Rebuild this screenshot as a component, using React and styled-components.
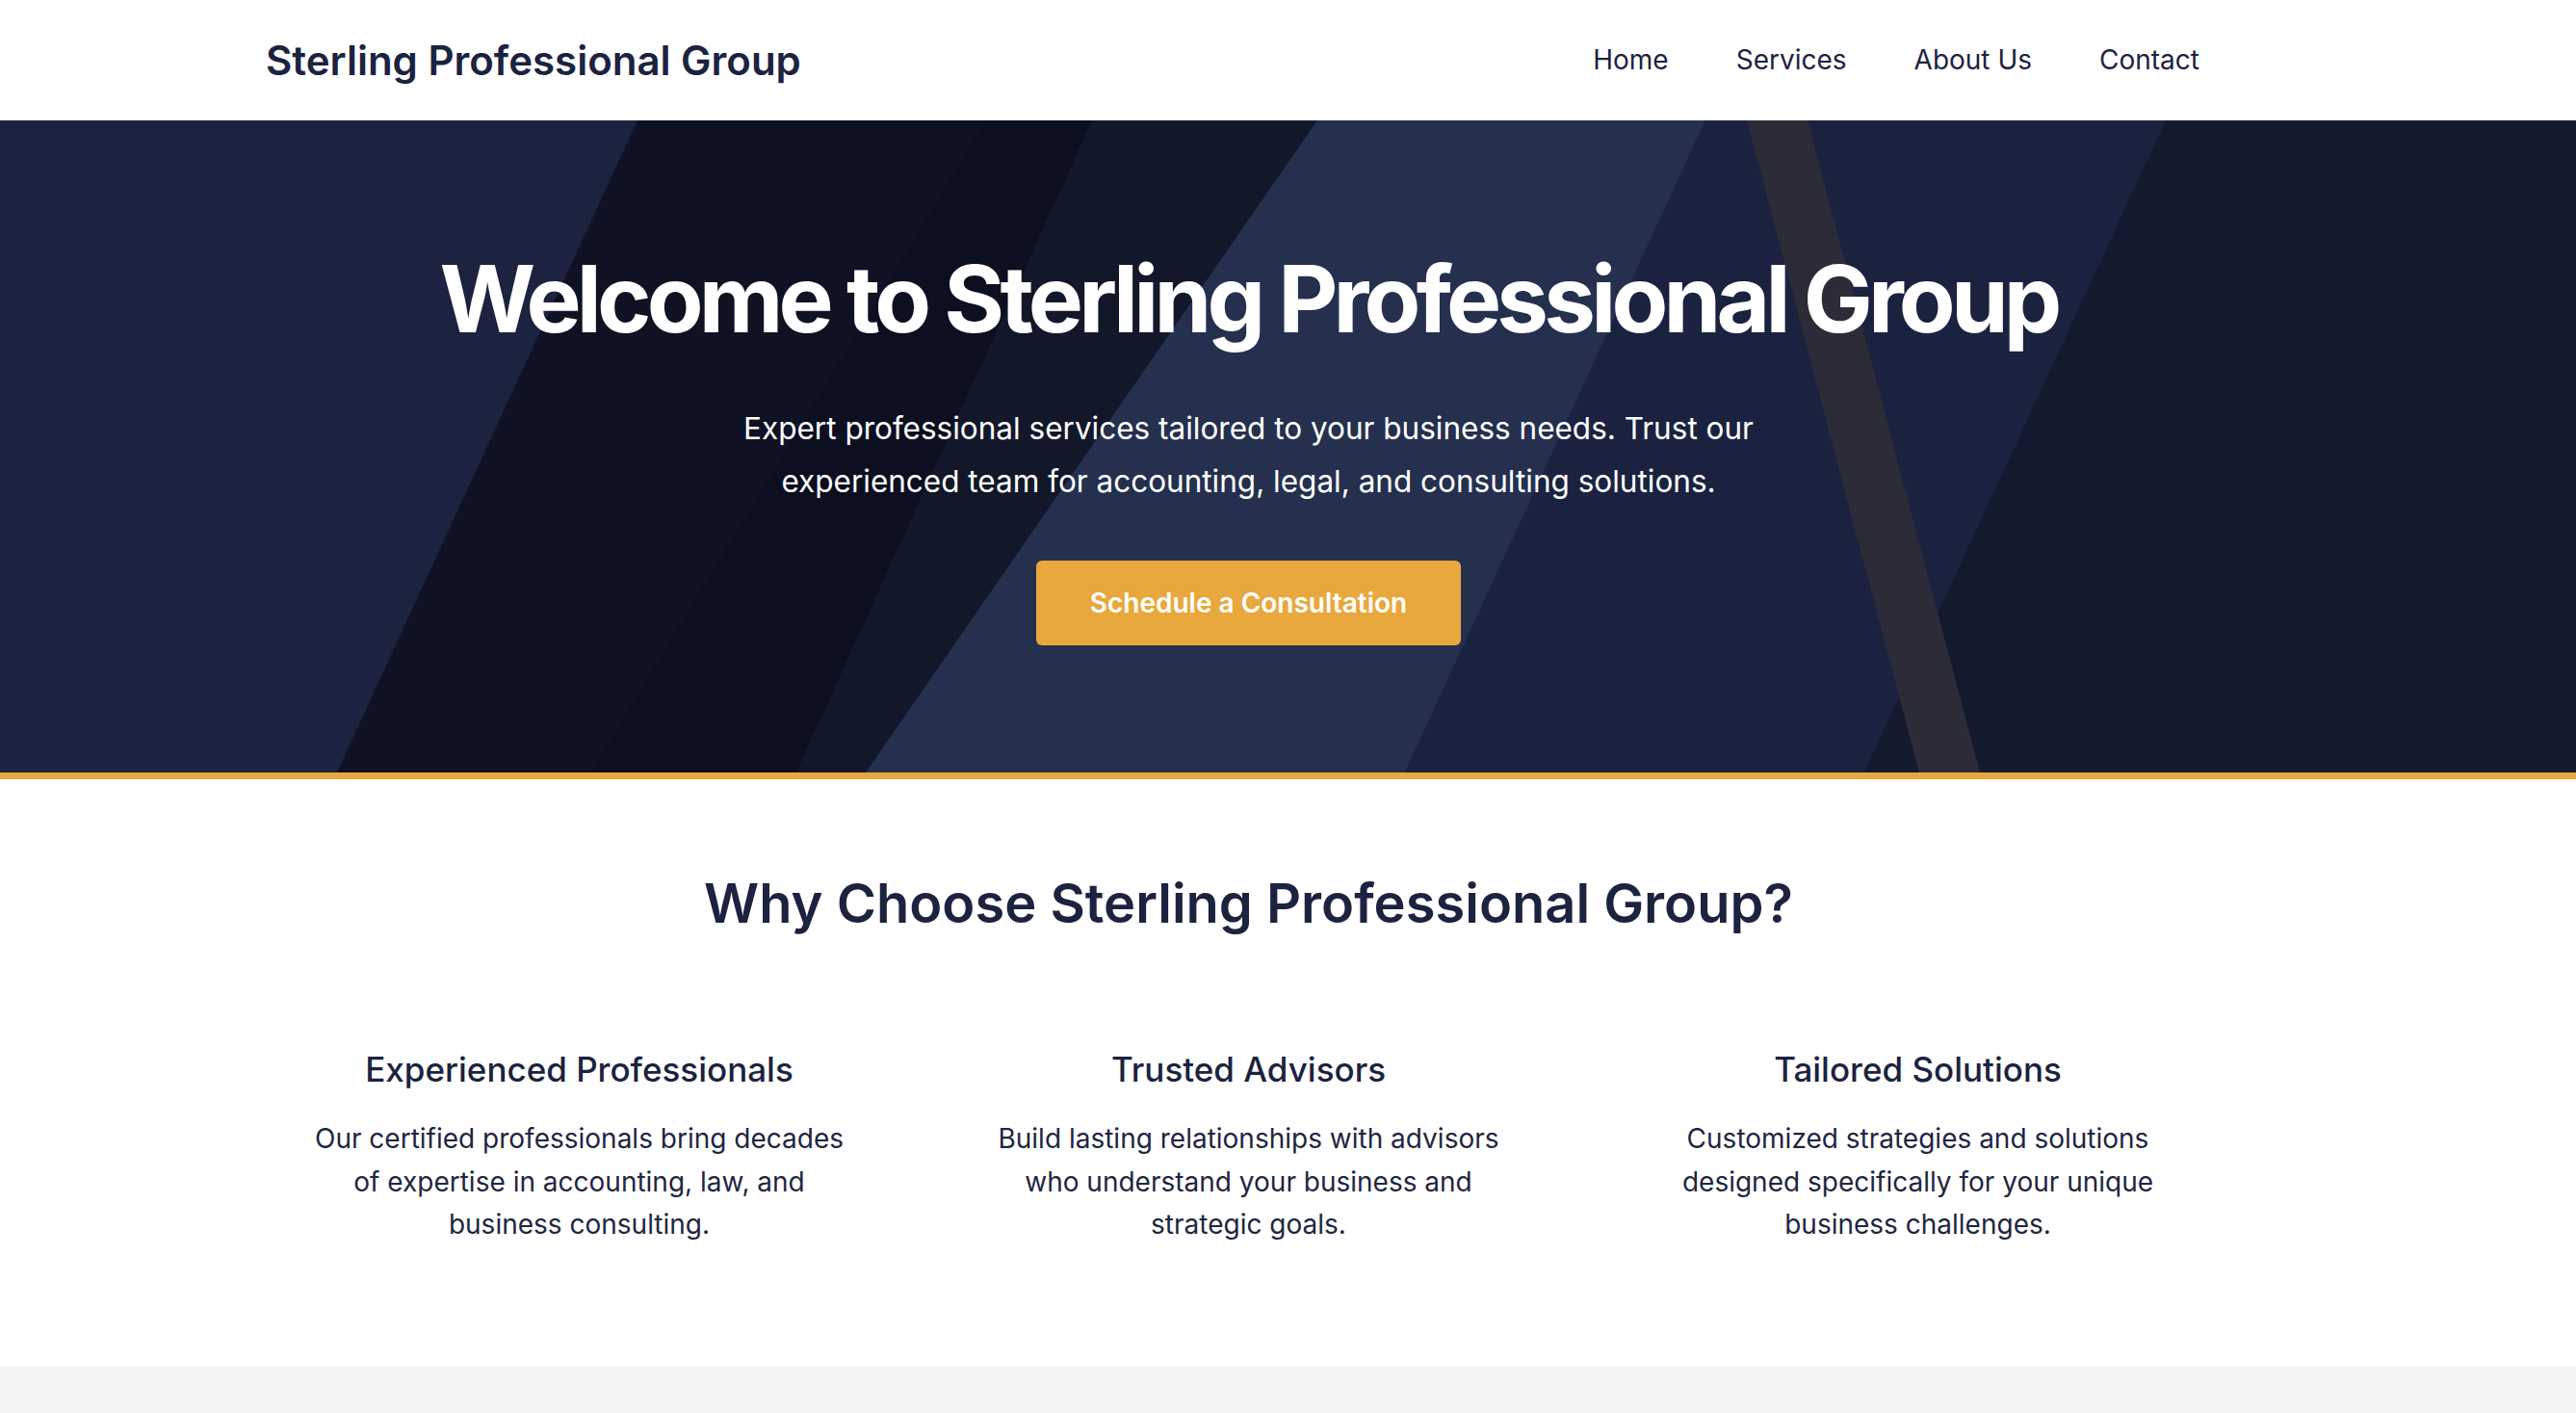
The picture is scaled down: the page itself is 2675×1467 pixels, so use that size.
import styled, { createGlobalStyle } from 'styled-components';

const GlobalStyle = createGlobalStyle`
    * {
        box-sizing: border-box;
    }

    body {
        margin: 0;
        font-family: 'Inter', 'Roboto', sans-serif;
        color: #1b2340;
        background: #f4f4f4;
    }
`;

const features = [
    {
        title: 'Experienced Professionals',
        text: 'Our certified professionals bring decades of expertise in accounting, law, and business consulting.',
    },
    {
        title: 'Trusted Advisors',
        text: 'Build lasting relationships with advisors who understand your business and strategic goals.',
    },
    {
        title: 'Tailored Solutions',
        text: 'Customized strategies and solutions designed specifically for your unique business challenges.',
    },
];

function HeroBackdrop () {

    return (
        <Backdrop viewBox="0 0 2675 677" preserveAspectRatio="none" aria-hidden="true">
            <rect width="2675" height="677" fill="#1b2340" />
            <polygon points="662,0 1134,0 827,677 350,677" fill="#0e1223" />
            <polygon points="1024,0 1134,0 827,677 614,677" fill="#0b0f1f" />
            <polygon points="1134,0 1368,0 899,677 827,677" fill="#121829" />
            <polygon points="1368,0 1771,0 1459,677 899,677" fill="#24304e" />
            <polygon points="1771,0 2249,0 1936,677 1459,677" fill="#1a2240" />
            <polygon points="2249,0 2675,0 2675,677 1936,677" fill="#131a2e" />
            <polygon points="1814,0 1877,0 2056,677 1993,677" fill="#2b2c38" />
        </Backdrop>
    );

}

export default function App () {

    return (

        <>
            <GlobalStyle />

            <Header>
                <Logo>Sterling Professional Group</Logo>
                <Nav>
                    <NavLink href="#">Home</NavLink>
                    <NavLink href="#">Services</NavLink>
                    <NavLink href="#">About Us</NavLink>
                    <NavLink href="#">Contact</NavLink>
                </Nav>
            </Header>

            <Hero>
                <HeroBackdrop />
                <HeroContent>
                    <HeroTitle>Welcome to Sterling Professional Group</HeroTitle>
                    <HeroText>
                        Expert professional services tailored to your business needs. Trust our
                        experienced team for accounting, legal, and consulting solutions.
                    </HeroText>
                    <CtaButton href="#">Schedule a Consultation</CtaButton>
                </HeroContent>
            </Hero>

            <Features>
                <SectionTitle>Why Choose Sterling Professional Group?</SectionTitle>
                <FeatureGrid>
                    {features.map((f) => (
                        <FeatureCard key={f.title}>
                            <FeatureTitle>{f.title}</FeatureTitle>
                            <FeatureText>{f.text}</FeatureText>
                        </FeatureCard>
                    ))}
                </FeatureGrid>
            </Features>

            <NextSection />
        </>

    );

}

const Header = styled.header`

    height: 125px;
    padding: 0 391px 0 276px;
    display: flex;
    align-items: center;
    justify-content: space-between;
    background: #FFFFFF;

`;

const Logo = styled.div`

    font-size: 42px;
    font-weight: 600;
    color: #1b2340;

`;

const Nav = styled.nav`

    display: flex;
    align-items: center;
    gap: 70px;
    margin-top: -2px;

`;

const NavLink = styled.a`

    font-size: 28px;
    color: #1b2340;
    text-decoration: none;

`;

const Hero = styled.section`

    position: relative;
    overflow: hidden;
    border-bottom: 7px solid #e9a83e;
    background: #1b2340;

`;

const Backdrop = styled.svg`

    position: absolute;
    inset: 0;
    width: 100%;
    height: 100%;
    display: block;

`;

const HeroContent = styled.div`

    position: relative;
    padding: 128px 82px 132px 0;
    display: flex;
    flex-direction: column;
    align-items: center;
    text-align: center;

`;

const HeroTitle = styled.h1`

    margin: 0 0 49px;
    font-size: 96px;
    line-height: 115px;
    font-weight: 700;
    letter-spacing: -0.05em;
    color: #FFFFFF;

`;

const HeroText = styled.p`

    margin: 0 0 55px;
    max-width: 1120px;
    font-size: 31.5px;
    line-height: 55px;
    color: #FFFFFF;

`;

const CtaButton = styled.a`

    height: 88px;
    padding: 0 56px;
    display: inline-flex;
    align-items: center;
    justify-content: center;
    font-size: 28px;
    font-weight: 600;
    color: #FFFFFF;
    text-decoration: none;
    background: #e9a83e;
    border-radius: 6px;

`;

const Features = styled.section`

    padding: 96px 82px 84px 0;
    display: flex;
    flex-direction: column;
    align-items: center;
    background: #FFFFFF;

`;

const SectionTitle = styled.h2`

    margin: 0 0 78px;
    font-size: 56px;
    line-height: 66px;
    font-weight: 600;
    color: #1b2340;

`;

const FeatureGrid = styled.div`

    width: 2030px;
    display: grid;
    grid-template-columns: repeat(3, 1fr);
    gap: 55px;

`;

const FeatureCard = styled.div`

    padding: 41px;
    text-align: center;

`;

const FeatureTitle = styled.h3`

    margin: 0 0 30px;
    font-size: 35px;
    line-height: 40px;
    font-weight: 500;
    color: #1b2340;

`;

const FeatureText = styled.p`

    margin: 0;
    font-size: 28px;
    line-height: 44.5px;
    color: #1e2640;

`;

const NextSection = styled.section`

    min-height: 400px;
    background: #f4f4f4;

`;
